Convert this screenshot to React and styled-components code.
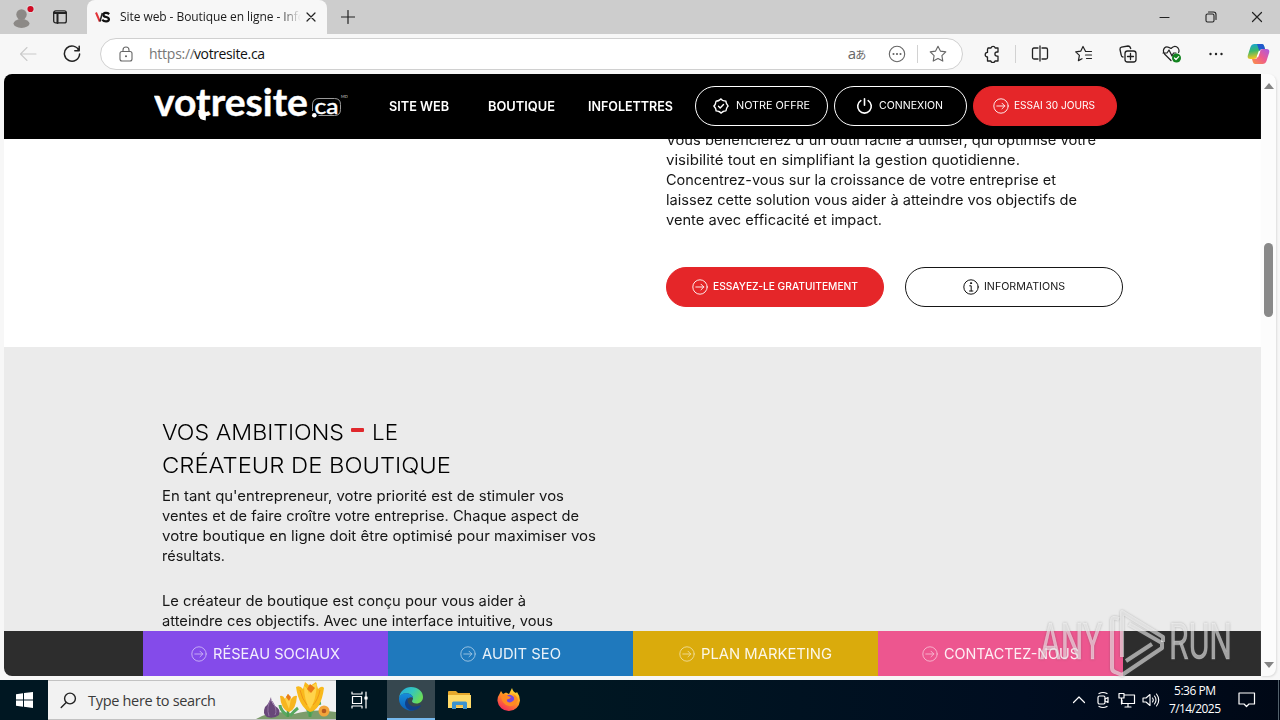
import React, { useLayoutEffect, useRef, useState } from "react";
import styled, { createGlobalStyle } from "styled-components";

const GlobalStyle = createGlobalStyle`
  * { box-sizing: border-box; }
  body {
    margin: 0;
    overflow: hidden;
    font-family: "Open Sans", "Noto Sans", sans-serif;
  }
  svg { display: block; flex-shrink: 0; }
`;

const siteFont = `"Inter", "Liberation Sans", sans-serif`;

const Screen = styled.div`
  width: 1280px;
  height: 720px;
  display: flex;
  flex-direction: column;
  overflow: hidden;
  background: #f7f7f7;
`;

/* ---------- text fitted to a fixed measure ---------- */

const FittedText = styled.span`
  display: block;
  flex-shrink: 0;
  width: ${props => props.$width}px;
  white-space: nowrap;
  > span {
    display: inline-block;
    transform-origin: 0 50%;
  }
`;

// letter-spacing by default, glyph width when stretch is set
const Tracked = ({ width, stretch, children }) => {
  const ref = useRef(null);
  const [natural, setNatural] = useState(0);

  useLayoutEffect(() => {
    if (!natural) {
      setNatural(ref.current.getBoundingClientRect().width);
    }
  }, [natural]);

  let style;
  if (natural) {
    style = stretch
      ? { transform: `scaleX(${width / natural})` }
      : { letterSpacing: (width - natural) / (children.length - 1) };
  }

  return (
    <FittedText $width={width}>
      <span ref={ref} style={style}>{children}</span>
    </FittedText>
  );
};

/* ---------- browser chrome ---------- */

const TabStrip = styled.div`
  height: 34px;
  flex-shrink: 0;
  display: flex;
  align-items: stretch;
  background: #cdcdcd;
`;

const StripButton = styled.div`
  width: ${props => props.$width}px;
  display: flex;
  align-items: center;
  justify-content: center;
`;

const Tab = styled.div`
  width: 240px;
  display: flex;
  align-items: center;
  padding: 0 7px 0 8px;
  background: #f7f7f7;
  border-radius: 8px 8px 0 0;
`;

const TabTitle = styled.div`
  width: 182px;
  margin-left: 8px;
  overflow: hidden;
  font-size: 12px;
  line-height: 20px;
  color: #1b1b1b;
  mask-image: linear-gradient(to right, #000 160px, transparent 181px);
`;

const Spacer = styled.div`
  flex: 1;
`;

const Toolbar = styled.div`
  height: 40px;
  flex-shrink: 0;
  display: flex;
  align-items: center;
  background: #f7f7f7;
`;

const ToolCell = styled.div`
  width: ${props => props.$width || 44}px;
  height: 32px;
  flex-shrink: 0;
  display: flex;
  align-items: center;
  justify-content: center;
  padding-left: ${props => props.$inset || 0}px;
`;

const AddressBar = styled.div`
  width: 863px;
  height: 32px;
  flex-shrink: 0;
  display: flex;
  align-items: center;
  padding-left: 4px;
  background: #fff;
  border: 1px solid #d0d0d0;
  border-radius: 16px;
`;

const Url = styled.div`
  display: flex;
  margin-left: ${props => props.$left}px;
  font-size: 14px;
  line-height: 20px;
  color: ${props => props.$color};
`;

const Translate = styled.span`
  font-family: "Open Sans", "Noto Sans CJK JP", sans-serif;
  font-size: 15px;
  line-height: 20px;
  color: #666;
  small { font-size: 11px; margin-left: -1px; }
`;

const Divider = styled.div`
  width: 1px;
  height: 18px;
  background: #d2d2d2;
`;

/* ---------- page ---------- */

const Viewport = styled.div`
  height: 606px;
  flex-shrink: 0;
  display: flex;
  padding: 0 4px 4px;
`;

const Page = styled.div`
  width: 1257px;
  height: 602px;
  display: flex;
  flex-direction: column;
  overflow: hidden;
  border-radius: 8px 0 0 8px;
  background: #fff;
  color: #161616;
  font-family: ${siteFont};
`;

const SiteHeader = styled.header`
  height: 65px;
  flex-shrink: 0;
  display: flex;
  align-items: center;
  padding-left: 150px;
  background: #000;
  color: #fff;
`;

const SiteNav = styled.nav`
  display: flex;
  margin: 1px 22px 0 41px;
  font-size: 12.8px;
  font-weight: 600;
  line-height: 16px;
`;

const NavItem = styled.div`
  width: ${props => props.$width}px;
`;

const PillGroup = styled.div`
  display: flex;
  gap: ${props => props.$gap}px;
  margin-top: ${props => props.$top || 0}px;
`;

const Pill = styled.div`
  width: ${props => props.$width}px;
  height: 40px;
  display: flex;
  align-items: center;
  justify-content: center;
  gap: ${props => props.$gap || 5}px;
  padding-right: ${props => props.$inset || 0}px;
  border: 1px solid ${props => (props.$kind === "red" ? "#e52629" : "currentColor")};
  border-radius: 20px;
  background: ${props => (props.$kind === "red" ? "#e52629" : "transparent")};
  color: ${props => (props.$kind === "dark" ? "#161616" : "#fff")};
  font-size: 10.4px;
  font-weight: ${props => props.$weight || 400};
  line-height: 14px;
`;

const Content = styled.main`
  height: 492px;
  flex-shrink: 0;
  overflow: hidden;
`;

const Intro = styled.section`
  height: 208px;
  padding-left: 662px;
  overflow: hidden;
`;

const Ambitions = styled.section`
  height: 420px;
  padding: 69px 0 0 157.6px;
  background: #ebebeb;
`;

const Paragraph = styled.div`
  margin-top: ${props => props.$top}px;
  font-size: 14.3px;
  line-height: 20px;
`;

const Heading = styled.h2`
  margin: 0;
  font-size: 22px;
  font-weight: 300;
  line-height: 33px;
  color: #000;
`;

const HeadingLine = styled.div`
  display: flex;
  align-items: center;
`;

const Dash = styled.span`
  width: 13px;
  height: 4px;
  margin: 0 8px 5px 7px;
  border-radius: 1px;
  background: #e0282c;
`;

const ActionBar = styled.div`
  height: 45px;
  flex-shrink: 0;
  display: flex;
  padding-left: 139px;
  background: #2d2d2d;
`;

const Action = styled.div`
  width: 245px;
  display: flex;
  align-items: center;
  justify-content: center;
  gap: 6px;
  padding-right: 1px;
  background: ${props => props.$color};
  color: rgba(255, 255, 255, 0.9);
  font-size: 14.5px;
  svg { opacity: 0.65; }
`;

const Scrollbar = styled.div`
  width: 15px;
  height: 602px;
  display: flex;
  flex-direction: column;
  align-items: center;
  padding: 9px 0 8px;
  background: #fcfcfc;
  border-radius: 0 8px 8px 0;
  box-shadow: 1px 1px 2px #ddd;
`;

const Arrow = styled.div`
  width: 0;
  height: 0;
  border: 5px solid transparent;
  border-top-width: ${props => (props.$up ? 0 : 6)}px;
  border-bottom-width: ${props => (props.$up ? 6 : 0)}px;
  border-${props => (props.$up ? "bottom" : "top")}-color: #858585;
`;

const Thumb = styled.div`
  width: 9px;
  height: 74px;
  margin-top: 154px;
  border-radius: 5px;
  background: #898989;
`;

const Watermark = styled.svg`
  position: absolute;
  left: 1036px;
  top: 604px;
  filter: drop-shadow(0 0 1px rgba(70, 70, 70, 0.6));
`;

/* ---------- taskbar ---------- */

const Taskbar = styled.div`
  height: 40px;
  flex-shrink: 0;
  display: flex;
  align-items: stretch;
  background: linear-gradient(90deg, #001722 0%, #001722 45%, #000d20 80%, #000816 100%);
  color: #fff;
`;

const TaskItem = styled.div`
  width: ${props => props.$width}px;
  display: flex;
  align-items: center;
  justify-content: center;
  padding-right: ${props => props.$inset || 0}px;
  background: ${props => (props.$active ? "#36474f" : "transparent")};
  border-bottom: ${props => (props.$active ? "2px solid #76b9ed" : "0")};
`;

const SearchBox = styled.div`
  width: 288px;
  display: flex;
  align-items: center;
  padding-left: 12px;
  background: #f2f2f2;
  border: solid #c2c2c2;
  border-width: 1px 0;
  color: #3a3a3a;
  font-size: 14.5px;
`;

const SearchLabel = styled.div`
  width: 168px;
  margin-left: 11px;
`;

const Clock = styled.div`
  width: 64px;
  padding-top: 2px;
  display: flex;
  flex-direction: column;
  align-items: center;
  font-size: 12px;
  line-height: 18px;
`;

const ShowDesktop = styled.div`
  width: 2px;
  border-left: 1px solid #52606b;
`;

/* ---------- icons ---------- */

const Icon = ({ w = 20, h = w, sw = 1.1, color = "#222", box, children }) => (
  <svg width={w} height={h} viewBox={box || `0 0 ${w} ${h}`} fill="none" stroke={color}
    strokeWidth={sw} strokeLinecap="round" strokeLinejoin="round">
    {children}
  </svg>
);

const ArrowCircle = () => (
  <Icon w={16} sw={0.9} color="currentColor">
    <circle cx="8" cy="8" r="7.2" />
    <path d="M3.8 8h8M9 5.2 11.8 8 9 10.8" />
  </Icon>
);

const Badge = () => (
  <Icon w={16} sw={1.4} color="currentColor">
    <path d="M8 .9Q9.200 2.500 10.200 2.600T12.900 3.100Q13.100 5 13.700 5.800T15.100 8Q13.900 9.400 13.700 10.200T12.900 12.900Q11 13.100 10.200 13.500T8 15.100Q6.800 13.700 5.800 13.500T3.100 12.900Q2.900 11 2.400 10.200T.9 8Q2.300 6.600 2.400 5.800T3.100 3.100Q5 2.900 5.800 2.500T8 .9z" />
    <path d="m5.500 8.200 1.700 1.700 3.300-3.400" />
  </Icon>
);

const Power = () => (
  <Icon w={17} h={16} sw={1.6} color="currentColor">
    <path d="M8.5 .8v6.500M4.800 2.600a6.800 6.800 0 1 0 7.400 0" />
  </Icon>
);

const Info = () => (
  <Icon w={16} sw={1} color="#111">
    <circle cx="8" cy="8" r="7.2" />
    <path d="M6.700 6.800h1.500v5.200M6.500 12h3.400" />
    <circle cx="8" cy="4.200" r=".6" fill="#111" />
  </Icon>
);

const Profile = () => (
  <svg width="26" height="26" viewBox="0 0 26 26">
    <circle cx="12.500" cy="10.500" r="5.200" fill="#8c8986" />
    <ellipse cx="12.500" cy="19.500" rx="8" ry="4.400" fill="#8c8986" />
    <circle cx="21.500" cy="5" r="4" fill="#dedede" />
    <circle cx="21.500" cy="5" r="3.100" fill="#d00b24" />
  </svg>
);

const Favicon = () => (
  <svg width="17" height="14" viewBox="0 0 17 14">
    <path d="M1 2.500 4.800 11.500" stroke="#e33339" strokeWidth="2" />
    <path d="M7.300 3 5 11.500" stroke="#222" strokeWidth="1.500" />
    <path d="M14.200 4.100C12 2.200 8.400 2.600 8.400 4.900c0 2.800 5.500 1.400 5.500 4.300 0 2.700-4.600 2.700-6.700.6" fill="none" stroke="#111" strokeWidth="2.300" />
  </svg>
);

const Logo = () => (
  <svg width="194" height="42" viewBox="0 0 194 42" fill="#fff">
    <text x="0" y="30" fontFamily="Lato, sans-serif" fontSize="38" fontWeight="700" stroke="#fff" strokeWidth=".4" textLength="154" lengthAdjust="spacingAndGlyphs">votresite</text>
    <path d="M46.600 24v3.500q0 4.500 5.200 4.700" fill="none" stroke="#fff" strokeWidth="4.400" />
    <circle cx="160.300" cy="29.200" r="2.300" />
    <path d="M158.500 25v-6q0-6.500 6.500-6.500h15.500q6 0 6 6v5q0 6-6 6h-16" fill="none" stroke="#aaa" strokeWidth=".9" />
    <text x="160.500" y="27.500" fontFamily="Lato, sans-serif" fontSize="22" fontWeight="400" stroke="#fff" strokeWidth=".5" textLength="24" lengthAdjust="spacingAndGlyphs">ca</text>
    <text x="187" y="12" fontFamily="Lato, sans-serif" fontSize="4" fill="#ccc">MD</text>
  </svg>
);

const Copilot = () => (
  <svg width="23" height="22" viewBox="0 0 23 22">
    <defs>
      <linearGradient id="cpA" x1="0" y1="0" x2=".2" y2="1">
        <stop offset="0" stopColor="#16a5dc" /><stop offset=".5" stopColor="#39b86d" /><stop offset="1" stopColor="#f6c520" />
      </linearGradient>
      <linearGradient id="cpB" x1="1" y1="0" x2="0" y2="1">
        <stop offset="0" stopColor="#a75be5" /><stop offset=".5" stopColor="#ee5b8d" /><stop offset="1" stopColor="#fb9243" />
      </linearGradient>
    </defs>
    <path d="M7.500 1H15q1.500 0 2.100 2l.9 3h-3q-2 0-2.700 2L10 14q-.7 2-3 2H3.500Q0 16 .8 12.500L3.500 4Q4.500 1 7.500 1z" fill="url(#cpA)" />
    <path d="M10 1h5q1.500 0 2.100 2l.9 3h-3q-2 0-2.700 2z" fill="#2359cd" />
    <path d="M15.500 21H8q-1.500 0-2.100-2L5 16h3q2 0 2.700-2L13 8q.7-2 3-2h3.500q3.500 0 2.700 3.500L19.500 18q-1 3-4 3z" fill="url(#cpB)" />
    <path d="M12.600 8 10.400 14" stroke="#fff" strokeWidth="1.500" />
  </svg>
);

const Crocuses = () => (
  <svg width="80" height="38" viewBox="0 0 80 38">
    <path d="M0 38Q18 28 38 33 58 27 80 31V38z" fill="#7c9c6b" />
    <path d="M32 35Q24 29 24 24M34 35Q38 30 42 27M54 35Q50 22 46 22M54 35Q58 23 65 22" stroke="#58a95f" strokeWidth="3" fill="none" />
    <path d="M32 36V26M54 36V21" stroke="#4c9d50" strokeWidth="2.500" />
    <path d="M15 16q-2 7-6 10-3 7 2 10 7 2 12-2 2-6-4-9-4-3-4-9z" fill="#684779" />
    <path d="M15 18q-5 8-2 17M16 20q6 9 3 14" stroke="#9475a4" fill="none" />
    <path d="M24 15q3-1 5 3l3-5 3 5q3-4 6-3-1 14-8 16-8-2-9-16z" fill="#f7b51f" />
    <path d="m29 18 3-5 3 5-2 10z" fill="#ffd34d" />
    <path d="m30 16 2-3 3 3-2 4z" fill="#e87918" />
    <path d="M40 6q4-2 7 2l2-7 5 4 6-4 2 7q4-4 6-1-3 22-14 24-11-5-14-25z" fill="#f9b91c" />
    <path d="M48 5q4 2 5 8l2-8 6-3q-1 18-7 26-6-8-6-23z" fill="#ffd44b" />
    <path d="M44 9q2 9 7 15M64 9q-2 10-7 15" stroke="#ef9517" fill="none" />
    <path d="m51 8 3-5 5 4-4 5z" fill="#e87918" />
    <circle cx="68" cy="30" r="5.500" fill="#f3a43a" />
    <circle cx="68" cy="30" r="2.300" fill="#b65920" />
  </svg>
);

const EdgeLogo = () => (
  <svg width="24" height="24" viewBox="0 0 24 24">
    <defs>
      <linearGradient id="edgeTop" x1="0" y1="0" x2="1" y2=".5">
        <stop offset="0" stopColor="#24a7df" /><stop offset=".55" stopColor="#34c6bd" /><stop offset="1" stopColor="#69dc59" />
      </linearGradient>
      <linearGradient id="edgeBase" x1="0" y1="0" x2="0" y2="1">
        <stop offset="0" stopColor="#168ddb" /><stop offset="1" stopColor="#0b5fb8" />
      </linearGradient>
    </defs>
    <path d="M0 11C1 4 6 0 12 0c7 0 12 4.500 12 10 0 4-3 6.500-6.500 6.500-3 0-4.500-1.200-4.500-2.200 0-.8 1-1.300 1-3 0-2.800-3-5-6.500-5C4 6.300 1 8 0 11z" fill="url(#edgeTop)" />
    <path d="M0 11c1-3.500 4-4.800 7.500-4.800 3.500 0 6.500 2.300 6.500 5-1-1.700-6-1.200-6 3.300 0 5 5 8.500 10 7.500A12 12 0 0 1 0 11z" fill="url(#edgeBase)" />
    <path d="M9 10.500c-2 6 3.500 11.500 11.500 8 1-.4 1.700.1 1 1C19 22.500 15 24 11.500 23.500 5 21 4.500 14 9 10.500z" fill="#123f87" />
  </svg>
);

const Folder = () => (
  <svg width="23" height="20" viewBox="0 0 23 20">
    <path d="M0 2q0-1 1-1h7l2 2h12v5H0z" fill="#e6a82c" />
    <path d="M0 5h23v13H0z" fill="#ffda68" />
    <path d="M4 19v-6q0-1.500 1.500-1.500h12Q19 11.500 19 13v6h-4v-4H8v4z" fill="#3c93cf" />
    <path d="M8 15h7v2H8z" fill="#f7c14b" />
  </svg>
);

const Firefox = () => (
  <svg width="24" height="24" viewBox="0 0 24 24">
    <defs>
      <linearGradient id="fox" x1=".8" y1="0" x2=".2" y2="1">
        <stop offset="0" stopColor="#ffe535" /><stop offset=".45" stopColor="#ff9722" /><stop offset="1" stopColor="#f5205f" />
      </linearGradient>
    </defs>
    <path d="M2.500 6 4 3l2 3 3-1.500L12 6l3-6q1 4 4 5l1-1q3 4 3 8.500A11.300 11.300 0 0 1 .5 13Q.2 9 2.500 6z" fill="url(#fox)" />
    <circle cx="12.500" cy="12" r="5.200" fill="#7547df" />
    <path d="M4 7q4-2 7 1l3 1q-1 2-4 2.500c-1 3 4 4.500 7 .5q1-4-2-6 5 1 6 6-3 7-9 6Q4 16 4 7z" fill="#ff8a22" />
  </svg>
);

const AnyRun = () => (
  <Watermark width="200" height="74" viewBox="0 0 200 74" fill="none" stroke="#fff" strokeOpacity=".55" strokeWidth="4">
    <g fill="#fff" fillOpacity=".55" stroke="#fff" strokeOpacity=".25" strokeWidth=".8" fontFamily="Roboto, sans-serif" fontSize="50">
      <text x="4" y="55" textLength="62" lengthAdjust="spacingAndGlyphs">ANY</text>
      <text x="133" y="55" textLength="63" lengthAdjust="spacingAndGlyphs">RUN</text>
    </g>
    <path d="M83 15Q76 12 76 17v47q0 3 3 4l7 3 40-27v-5L93 20" strokeLinejoin="round" />
    <path d="M86 53V8l41 25v5M90 57l26-17" strokeLinejoin="round" />
  </Watermark>
);

const introLines = [
  ["Vous bénéficierez d'un outil facile à utiliser, qui optimise votre", 430],
  ["visibilité tout en simplifiant la gestion quotidienne.", 354],
  ["Concentrez-vous sur la croissance de votre entreprise et", 390],
  ["laissez cette solution vous aider à atteindre vos objectifs de", 411],
  ["vente avec efficacité et impact.", 216]
];

const priorityLines = [
  ["En tant qu'entrepreneur, votre priorité est de stimuler vos", 402],
  ["ventes et de faire croître votre entreprise. Chaque aspect de", 417],
  ["votre boutique en ligne doit être optimisé pour maximiser vos", 434],
  ["résultats.", 63]
];

const goalLines = [
  ["Le créateur de boutique est conçu pour vous aider à", 364],
  ["atteindre ces objectifs. Avec une interface intuitive, vous", 391]
];

const actions = [
  ["RÉSEAU SOCIAUX", 127, "#844bea"],
  ["AUDIT SEO", 79, "#1f79bd"],
  ["PLAN MARKETING", 131, "#daab0c"],
  ["CONTACTEZ-NOUS", 135, "#ed568f"]
];

const Lines = ({ items }) => items.map(([text, width]) => (
  <Tracked key={text} stretch width={width}>{text}</Tracked>
));

const BrowserTabs = () => (
  <TabStrip>
    <StripButton $width={44}><Profile /></StripButton>
    <StripButton $width={32}>
      <Icon w={14} sw={1.3}><rect x=".7" y=".9" width="12.600" height="12" rx="2" /><path d="M1 3h12M4.500 3v10" strokeWidth="2" /></Icon>
    </StripButton>
    <StripButton $width={11} />
    <Tab>
      <Favicon />
      <TabTitle><Tracked width={188}>Site web - Boutique en ligne - Infol</Tracked></TabTitle>
      <Spacer />
      <Icon w={18} sw={1.2}><path d="m5 5 8 8M13 5l-8 8" /></Icon>
    </Tab>
    <StripButton $width={42}><Icon w={14} sw={1.2}><path d="M7 .5v13M.5 7h13" /></Icon></StripButton>
    <Spacer />
    <StripButton $width={46}><Icon w={12}><path d="M1 6.500h9" /></Icon></StripButton>
    <StripButton $width={46}>
      <Icon w={12}><rect x="1" y="3" width="8" height="8" rx="1.500" /><path d="M3.500 1h5Q11 1 11 3.500v5" /></Icon>
    </StripButton>
    <StripButton $width={46}><Icon w={12} sw={1.200}><path d="m1.500 1.500 9 9M10.500 1.500l-9 9" /></Icon></StripButton>
  </TabStrip>
);

const starPath = "M10 2.200l2.400 4.900 5.400.8-3.900 3.800.9 5.400-4.800-2.600-4.800 2.600.9-5.400-3.900-3.800 5.400-.8z";

const BrowserToolbar = () => (
  <Toolbar>
    <ToolCell $width={56}><Icon w={18} color="#cacaca"><path d="M17 9H2M8 2.500 1.500 9 8 15.500" /></Icon></ToolCell>
    <ToolCell $width={32}><Icon w={18} sw={1.500}><path d="M16 5.600A7.600 7.600 0 1 0 16.600 9M16.200 1.300v4.500h-4.400" /></Icon></ToolCell>
    <ToolCell $width={12} />
    <AddressBar>
      <ToolCell $width={41}>
        <Icon w={16} color="#666"><rect x="2" y="5.500" width="12" height="9.500" rx="2" /><path d="M5 5.500V4a3 3 0 0 1 6 0v1.500" /><circle cx="8" cy="10.300" r=".5" fill="#666" /></Icon>
      </ToolCell>
      <Url $color="#777" $left={3}><Tracked width={46}>https://</Tracked></Url>
      <Url $color="#111" $left={-1}><Tracked width={71}>votresite.ca</Tracked></Url>
      <Spacer />
      <ToolCell $width={40}><Translate>a<small>あ</small></Translate></ToolCell>
      <ToolCell $width={40}>
        <Icon w={18} color="#666"><circle cx="9" cy="9" r="7.700" /><g fill="#666"><circle cx="5.500" cy="9" r=".5" /><circle cx="9" cy="9" r=".5" /><circle cx="12.500" cy="9" r=".5" /></g></Icon>
      </ToolCell>
      <Divider />
      <ToolCell $width={40}><Icon w={18} box="1 1 18 18" color="#666"><path d={starPath} /></Icon></ToolCell>
      <ToolCell $width={4} />
    </AddressBar>
    <ToolCell $width={52} $inset={5}>
      <Icon w={18} sw={1.300}><path d="M5 3h3a2.200 2.200 0 0 1 4.200 0H15v4h-1a2.100 2.100 0 0 0 0 4.200h1V16h-3a2.200 2.200 0 0 1-4.200 0H4.500v-4a2.300 2.300 0 1 1 0-4.600V4.500Z" /></Icon>
    </ToolCell>
    <Divider />
    <ToolCell $width={46} $inset={2}>
      <Icon w={18} sw={1.300}><path d="M7 3H3Q1.500 3 1.500 4.500v8Q1.500 14 3 14h4M11 3h4q1.500 0 1.500 1.500v8q0 1.500-1.500 1.500h-4M9 1v15" /></Icon>
    </ToolCell>
    <ToolCell><Icon w={18} sw={1.200}><path d="M10.500 6.200 8 1.500 5.700 6.200l-5 .7 3.700 3.500-1 5.200L7 13.700M10.500 6.500h6M10.500 10h6M11.500 13.500h5" /></Icon></ToolCell>
    <ToolCell>
      <Icon w={18} sw={1.300}><rect x="6" y="6" width="11" height="11" rx="2.500" /><path d="M11.500 8.500v6M8.500 11.500h6M4 12Q2.500 12 2.200 10L1 4.500q-.2-2 1.500-2.400L9 1q2 0 2.700 2.500" /></Icon>
    </ToolCell>
    <ToolCell>
      <Icon w={20} h={18} sw={1.200}><path d="M9 15.500 2.500 9Q.3 5.700 2.500 3T9 3.500Q13-.5 16 3q1.700 2.200.6 4.500M1 8h4l2-3 3 6 1.500-3H14" /><circle cx="14.500" cy="13" r="4.500" fill="#12831f" stroke="none" /><path d="m12.500 13 1.500 1.500 2.700-2.800" stroke="#fff" /></Icon>
    </ToolCell>
    <ToolCell><Icon w={14}><g fill="#222" stroke="none"><circle cx="1.500" cy="7" r="1.200" /><circle cx="7" cy="7" r="1.200" /><circle cx="12.500" cy="7" r="1.200" /></g></Icon></ToolCell>
    <ToolCell $width={40}><Copilot /></ToolCell>
  </Toolbar>
);

const WebPage = () => (
  <Page>
    <SiteHeader>
      <Logo />
      <SiteNav>
        <NavItem $width={99}><Tracked stretch width={60}>SITE WEB</Tracked></NavItem>
        <NavItem $width={100}><Tracked stretch width={67}>BOUTIQUE</Tracked></NavItem>
        <NavItem $width={85}><Tracked stretch width={85}>INFOLETTRES</Tracked></NavItem>
      </SiteNav>
      <PillGroup $gap={6} $top={-1}>
        <Pill $width={133} $gap={7}><Badge /><Tracked stretch width={74}>NOTRE OFFRE</Tracked></Pill>
        <Pill $width={133} $gap={6} $inset={2}><Power /><Tracked stretch width={64}>CONNEXION</Tracked></Pill>
        <Pill $width={144} $kind="red" $inset={2}><ArrowCircle /><Tracked stretch width={81}>ESSAI 30 JOURS</Tracked></Pill>
      </PillGroup>
    </SiteHeader>
    <Content>
      <Intro>
        <Paragraph $top={-9}><Lines items={introLines} /></Paragraph>
        <PillGroup $gap={21} $top={37}>
          <Pill $width={218} $kind="red" $weight={500} $inset={1}><ArrowCircle /><Tracked stretch width={145}>ESSAYEZ-LE GRATUITEMENT</Tracked></Pill>
          <Pill $width={218} $kind="dark" $inset={1}><Info /><Tracked stretch width={81}>INFORMATIONS</Tracked></Pill>
        </PillGroup>
      </Intro>
      <Ambitions>
        <Heading>
          <HeadingLine>
            <Tracked stretch width={182}>VOS AMBITIONS</Tracked>
            <Dash />
            <Tracked stretch width={26}>LE</Tracked>
          </HeadingLine>
          <Tracked stretch width={289}>CRÉATEUR DE BOUTIQUE</Tracked>
        </Heading>
        <Paragraph $top={4}><Lines items={priorityLines} /></Paragraph>
        <Paragraph $top={25}><Lines items={goalLines} /></Paragraph>
      </Ambitions>
    </Content>
    <ActionBar>
      {actions.map(([label, width, color]) => (
        <Action key={label} $color={color}><ArrowCircle /><Tracked stretch width={width}>{label}</Tracked></Action>
      ))}
    </ActionBar>
  </Page>
);

const WindowsTaskbar = () => (
  <Taskbar>
    <TaskItem $width={48}>
      <svg width="17" height="16" viewBox="0 0 17 16" fill="#fff"><path d="M0 2.300 7 1.300v6.300H0zM8 1.100 17 0v7.600H8zM0 8.500h7v6.300l-7-1zM8 8.500h9V16l-9-1.200z" /></svg>
    </TaskItem>
    <SearchBox>
      <Icon w={17} sw={1.400}><circle cx="10" cy="6.500" r="5.400" /><path d="m6.200 10.600-5 5" /></Icon>
      <SearchLabel><Tracked width={128}>Type here to search</Tracked></SearchLabel>
      <Crocuses />
    </SearchBox>
    <TaskItem $width={51} $inset={3}>
      <Icon w={18} sw={1.200} color="#fff"><path d="M1 1v2h10V1M1 17v-2h10v2M1.500 5.500h9v7h-9zM15 1v16" /><path d="M14 6h2v2h-2z" fill="#fff" /></Icon>
    </TaskItem>
    <TaskItem $width={48} $active><EdgeLogo /></TaskItem>
    <TaskItem $width={50} $inset={1}><Folder /></TaskItem>
    <TaskItem $width={48}><Firefox /></TaskItem>
    <Spacer />
    <TaskItem $width={24}><Icon w={14} sw={1.200} color="#fff"><path d="M1.500 9.500 7 4l5.500 5.500" /></Icon></TaskItem>
    <TaskItem $width={24}>
      <Icon w={14} h={18} sw={1.200} color="#fff"><rect x="2" y="5" width="7" height="8" rx="1.500" /><path d="m9 8 3-1.500v5L9 10M3 2.500q4-2 8 0M3 15.500q4 2 8 0" /></Icon>
    </TaskItem>
    <TaskItem $width={24}>
      <Icon w={18} h={16} sw={1.200} color="#fff"><path d="M6 3h10.500v8.500H4V8M10 12v3M7 15h6M1 1.500h5V6H1zM3.500 6v6" /></Icon>
    </TaskItem>
    <TaskItem $width={24}>
      <Icon w={18} h={16} sw={1.100} color="#fff"><path d="M1 6h3l4-3.500v11L4 10H1zM10.500 6q1.500 2 0 4M12.500 4q3 4 0 8M14.500 2q4.500 6 0 12" /></Icon>
    </TaskItem>
    <Clock><Tracked width={42}>5:36 PM</Tracked><Tracked width={52}>7/14/2025</Tracked></Clock>
    <TaskItem $width={40}>
      <Icon w={18} sw={1.200} color="#fff"><path d="M1 2h15.500v11H11l-2.500 2.500L6 13H1z" /></Icon>
    </TaskItem>
    <TaskItem $width={11} />
    <ShowDesktop />
  </Taskbar>
);

export default function App() {
  return (
    <Screen>
      <GlobalStyle />
      <BrowserTabs />
      <BrowserToolbar />
      <Viewport>
        <WebPage />
        <Scrollbar>
          <Arrow $up />
          <Thumb />
          <Spacer />
          <Arrow />
        </Scrollbar>
      </Viewport>
      <WindowsTaskbar />
      <AnyRun />
    </Screen>
  );
}
